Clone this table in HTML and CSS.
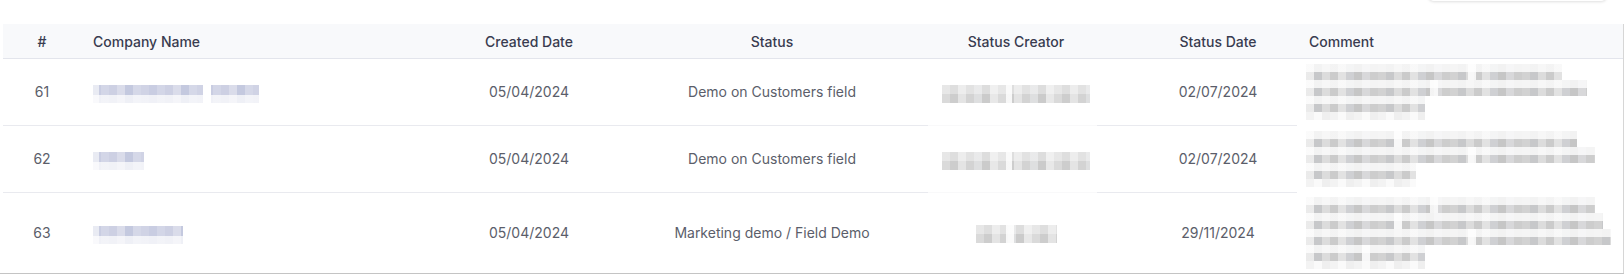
FILE: index.html
```html
<!DOCTYPE html>
<html lang="en">
<head>
<meta charset="utf-8">
<title>Status table</title>
<link rel="stylesheet" href="styles.css">
</head>
<body>
<div class="page">
  <div class="toolbar"><div class="search"></div></div>
  <div class="table">
    <div class="row head">
      <div class="cell center">#</div>
      <div class="cell left">Company Name</div>
      <div class="cell center">Created Date</div>
      <div class="cell center">Status</div>
      <div class="cell center">Status Creator</div>
      <div class="cell center">Status Date</div>
      <div class="cell left">Comment</div>
    </div>

    <div class="row std">
      <div class="cell center">61</div>
      <div class="cell left"><div class="mz-blue w166 gap-a"></div></div>
      <div class="cell center">05/04/2024</div>
      <div class="cell center">Demo on Customers field</div>
      <div class="cell center creator"><div class="mz-grey w148 gap-b"></div></div>
      <div class="cell center">02/07/2024</div>
      <div class="cell left comment">
        <div class="lines">
          <div class="line w256 gap-c"></div>
          <div class="line w281 gap-d"></div>
          <div class="line w119"></div>
          <div class="trail w119"></div>
        </div>
      </div>
    </div>

    <div class="row std">
      <div class="cell center">62</div>
      <div class="cell left"><div class="mz-blue w51"></div></div>
      <div class="cell center">05/04/2024</div>
      <div class="cell center">Demo on Customers field</div>
      <div class="cell center creator"><div class="mz-grey w148 gap-b"></div></div>
      <div class="cell center">02/07/2024</div>
      <div class="cell left comment">
        <div class="lines">
          <div class="line w271 gap-e"></div>
          <div class="line w289 gap-c"></div>
          <div class="line w110"></div>
          <div class="trail w110"></div>
        </div>
      </div>
    </div>

    <div class="row tall last">
      <div class="cell center">63</div>
      <div class="cell left"><div class="mz-blue w90"></div></div>
      <div class="cell center">05/04/2024</div>
      <div class="cell center">Marketing demo / Field Demo</div>
      <div class="cell center"><div class="mz-grey w81 gap-f"></div></div>
      <div class="cell center">29/11/2024</div>
      <div class="cell left comment">
        <div class="lines">
          <div class="line w289 gap-d"></div>
          <div class="line w297 gap-e"></div>
          <div class="line w305 gap-c"></div>
          <div class="line w119 gap-g"></div>
          <div class="trail w119"></div>
        </div>
      </div>
    </div>
  </div>
</div>
</body>
</html>
```
FILE: styles.css
```css
* { box-sizing: border-box; }

html, body {
  margin: 0;
  padding: 0;
  background: #ffffff;
}

body {
  font-family: "Inter", "Open Sans", "Liberation Sans", sans-serif;
  font-size: 14px;
  color: #5b5e6a;
  overflow: hidden;
}

.page {
  width: 1624px;
  height: 274px;
  border-bottom: 1px solid #c4c4c4;
}

.toolbar {
  height: 24px;
  display: flex;
  justify-content: flex-end;
  padding-right: 17px;
  overflow: hidden;
}

.search {
  width: 179px;
  height: 30px;
  margin-top: -29px;
  border-radius: 6px;
  background: #ffffff;
  box-shadow: 0 1px 3px rgba(0, 0, 0, 0.13);
}

.table {
  margin-left: 3px;
  width: 1621px;
  border-right: 1px solid #d6d6d6;
}

.row {
  display: grid;
  grid-template-columns: 78px 326px 244px 242px 246px 158px 1fr;
}

.head {
  height: 35px;
  background: #f8f9fb;
  border-bottom: 1px solid #e3e5ec;
  color: #393c50;
  font-weight: 500;
}

.std { height: 67px; }
.tall { height: 80px; }

.std .cell {
  border-bottom: 1px solid #e9eaef;
  padding-bottom: 2px;
}

.tall .cell { padding-bottom: 2px; }

.std .cell.comment {
  border-bottom-color: transparent;
  padding-bottom: 0;
}

.tall .cell.comment { padding-bottom: 0; }

.std .cell.creator {
  border-bottom: 0;
  background: linear-gradient(90deg, #e9eaef 0 35px, #f9f9fa 35px calc(100% - 42px), #e9eaef calc(100% - 42px)) bottom / 100% 1px no-repeat;
}

.cell {
  display: flex;
  align-items: center;
  padding: 0 12px;
  white-space: nowrap;
}

.center { justify-content: center; }
.left { justify-content: flex-start; }

.comment { padding-left: 9px; }

.lines {
  display: flex;
  flex-direction: column;
}

.mz-blue, .mz-grey, .line {
  --gap-at: -20px;
  --gap-w: 8px;
}

.mz-blue {
  height: 18px;
  margin-top: 6px;
  background:
    linear-gradient(90deg, transparent 0 var(--gap-at), #ffffff var(--gap-at) calc(var(--gap-at) + var(--gap-w)), transparent calc(var(--gap-at) + var(--gap-w))),
    linear-gradient(180deg, rgba(255,255,255,0) 0 10px, rgba(255,255,255,0.72) 10px 18px),
    linear-gradient(90deg, rgba(255,255,255,0.6) 0 6px, transparent 6px),
    repeating-linear-gradient(90deg, #c9cde2 0 8px, #d3d6e7 8px 16px, #cdd0e3 16px 24px, #dadcea 24px 32px, #c4c9df 32px 40px, #d5d8e8 40px 48px, #d0d3e5 48px 56px);
}

.mz-grey {
  height: 18px;
  margin-top: 4px;
  background:
    linear-gradient(90deg, transparent 0 var(--gap-at), rgba(255,255,255,0.85) var(--gap-at) calc(var(--gap-at) + var(--gap-w)), transparent calc(var(--gap-at) + var(--gap-w))),
    linear-gradient(180deg, rgba(255,255,255,0.35) 0 9px, rgba(255,255,255,0) 9px 18px),
    repeating-linear-gradient(90deg, #dadada 0 8px, #cdcdcd 8px 16px, #e4e4e4 16px 24px, #d3d3d3 24px 32px, #dedfe0 32px 40px, #cbcbcb 40px 48px, #e8e8e8 48px 56px);
}

.line {
  height: 16px;
  background:
    linear-gradient(90deg, transparent 0 var(--gap-at), rgba(255,255,255,0.8) var(--gap-at) calc(var(--gap-at) + var(--gap-w)), transparent calc(var(--gap-at) + var(--gap-w))),
    linear-gradient(180deg, rgba(255,255,255,0.78) 0 8px, rgba(255,255,255,0) 8px 16px),
    linear-gradient(90deg, rgba(255,255,255,0.55) 0 8px, transparent 8px),
    repeating-linear-gradient(90deg, #d2d2d2 0 8px, #c7c8ca 8px 16px, #dcdcdc 16px 24px, #cbcbcb 24px 32px, #e2e2e2 32px 40px, #cfd0d3 40px 48px, #c6c6c6 48px 56px, #d8d8da 56px 64px, #cdcdcd 64px 72px);
}

.trail {
  height: 8px;
  background: repeating-linear-gradient(90deg, #f3f3f3 0 8px, #fafafa 8px 16px, #efefef 16px 24px);
}

.gap-a { --gap-at: 110px; }
.gap-b { --gap-at: 64px; --gap-w: 6px; }
.gap-c { --gap-at: 162px; }
.gap-d { --gap-at: 124px; }
.gap-e { --gap-at: 88px; }
.gap-f { --gap-at: 30px; }
.gap-g { --gap-at: 56px; }

.w51 { width: 51px; }
.w81 { width: 81px; }
.w90 { width: 90px; }
.w110 { width: 110px; }
.w119 { width: 119px; }
.w148 { width: 148px; }
.w166 { width: 166px; }
.w256 { width: 256px; }
.w271 { width: 271px; }
.w281 { width: 281px; }
.w289 { width: 289px; }
.w297 { width: 297px; }
.w305 { width: 305px; }
```
